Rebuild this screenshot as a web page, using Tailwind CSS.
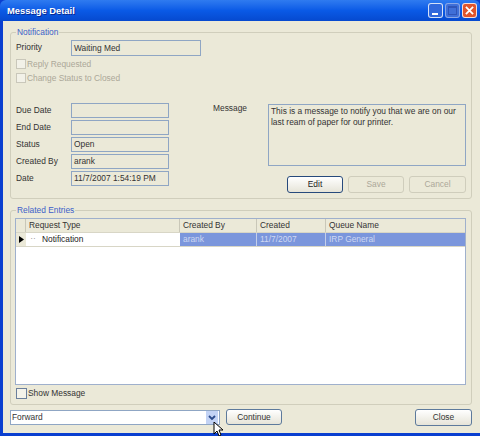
<!DOCTYPE html>
<html><head><meta charset="utf-8"><script src="https://cdn.jsdelivr.net/npm/@tailwindcss/browser@4"></script></head>
<body class="m-0 bg-[#0a3fd0]">
<div class="relative w-[480px] h-[436px] overflow-hidden font-['Liberation_Sans',Arial,sans-serif] text-[8.4px] leading-[13px] text-[#333]">
  <div class="w-[480px] h-[436px] flex flex-col bg-[#0a3fd0] rounded-t-[6px] overflow-hidden">
    <div class="h-[21px] shrink-0 flex items-center justify-between pl-[7px] pr-[3px] bg-gradient-to-b from-[#2f7bf0] via-[#0a5ae6] to-[#0649cf]">
      <span class="text-white font-bold text-[9.4px] [text-shadow:1px_1px_0_#0a2a90]">Message Detail</span>
      <div class="flex gap-[2px]">
        <div class="w-[15px] h-[15px] rounded-[3px] border border-white/80 bg-[#3168dc] flex items-end pl-[3px] pb-[2px]"><div class="w-[6px] h-[2px] bg-white"></div></div>
        <div class="w-[15px] h-[15px] rounded-[3px] border border-white/40 bg-[#3f6fd8] flex items-center justify-center"><div class="w-[9px] h-[9px] border border-[#2f55b8] border-t-2"></div></div>
        <div class="w-[15px] h-[15px] rounded-[3px] border border-white/80 bg-[#e0552c] flex items-center justify-center"><svg width="9" height="9" viewBox="0 0 10 10"><path d="M1 1L9 9M9 1L1 9" stroke="#fff" stroke-width="2"/></svg></div>
      </div>
    </div>
    <div class="flex-1 ml-[3px] mb-[3px] bg-[#ebe9d8] pt-[11px] pl-[7px]">
      <fieldset class="relative h-[167px] w-[462px] border border-[#d0cebc] rounded-[3px] pl-[5px]">
        <span class="absolute left-[5px] -top-[7px] bg-[#ebe9d8] px-[1px] text-[#3d5fc8]">Notification</span>
        <div class="pt-[6px] flex items-center h-[23px]"><span class="w-[55px]">Priority</span><div class="w-[130px] h-[16px] border border-[#8fa6c4] px-[2px] leading-[15px]">Waiting Med</div></div>
        <div class="flex items-center h-[14px] mt-[1px] text-[#aca899]"><div class="w-[10px] h-[10px] border border-[#c9c7ba] bg-[#f2f1e8] mr-[1px]"></div><span>Reply Requested</span></div>
        <div class="flex items-center h-[14px] text-[#aca899]"><div class="w-[10px] h-[10px] border border-[#c9c7ba] bg-[#f2f1e8] mr-[1px]"></div><span>Change Status to Closed</span></div>
        <div class="flex mt-[18px]">
          <div class="flex flex-col gap-[2px] w-[197px] shrink-0">
            <div class="flex items-center h-[15px]"><span class="w-[55px]">Due Date</span><div class="w-[98px] h-[15px] border border-[#8fa6c4]"></div></div>
            <div class="flex items-center h-[15px]"><span class="w-[55px]">End Date</span><div class="w-[98px] h-[15px] border border-[#8fa6c4]"></div></div>
            <div class="flex items-center h-[15px]"><span class="w-[55px]">Status</span><div class="w-[98px] h-[15px] border border-[#8fa6c4] px-[2px]">Open</div></div>
            <div class="flex items-center h-[15px]"><span class="w-[55px]">Created By</span><div class="w-[98px] h-[15px] border border-[#8fa6c4] px-[2px]">arank</div></div>
            <div class="flex items-center h-[15px]"><span class="w-[55px]">Date</span><div class="w-[98px] h-[15px] border border-[#8fa6c4] px-[2px]">11/7/2007 1:54:19 PM</div></div>
          </div>
          <div class="flex flex-1 pr-[5px]">
            <span class="w-[55px] mt-[-1px] shrink-0">Message</span>
            <div class="flex-1">
              <div class="h-[62px] mt-[1px] border border-[#8fa6c4] px-[2px] py-[1px] leading-[11px]">This is a message to notify you that we are on our last ream of paper for our printer.</div>
              <div class="flex justify-end gap-[5px] mt-[10px]">
                <button class="w-[56px] h-[17px] rounded-[3px] border border-[#274a7c] bg-gradient-to-b from-white to-[#e6e4d8] text-[#222]">Edit</button>
                <button class="w-[56px] h-[17px] rounded-[3px] border border-[#cfcdbc] text-[#aca899]">Save</button>
                <button class="w-[57px] h-[17px] rounded-[3px] border border-[#cfcdbc] text-[#aca899]">Cancel</button>
              </div>
            </div>
          </div>
        </div>
      </fieldset>
      <fieldset class="relative h-[195px] w-[462px] mt-[11px] border border-[#d0cebc] rounded-[3px] px-[4px] pt-[7px]">
        <span class="absolute left-[5px] -top-[7px] bg-[#ebe9d8] px-[1px] text-[#3d5fc8]">Related Entries</span>
        <div class="h-[167px] w-[451px] border border-[#9fb0cc] bg-white">
          <div class="flex h-[14px] bg-[#ebe9d8] border-b border-[#d8d6c6]">
            <div class="w-[10px] border-r border-[#c9c7b8]"></div>
            <div class="w-[154px] pl-[3px] border-r border-[#c9c7b8]">Request Type</div>
            <div class="w-[77px] pl-[3px] border-r border-[#c9c7b8]">Created By</div>
            <div class="w-[69px] pl-[3px] border-r border-[#c9c7b8]">Created</div>
            <div class="flex-1 pl-[3px]">Queue Name</div>
          </div>
          <div class="flex h-[14px] border-b border-[#d8d6c6]">
            <div class="w-[10px] bg-[#ebe9d8] flex items-center justify-center"><svg width="5" height="7" viewBox="0 0 5 7"><path d="M0 0L5 3.5L0 7Z" fill="#000"/></svg></div>
            <div class="w-[14px] text-[#999] text-center leading-[11px]">··</div>
            <div class="w-[140px] pl-[2px] text-[#222]">Notification</div>
            <div class="flex-1 flex bg-[#7b96dc] text-[#cfd8f2]">
              <div class="w-[77px] pl-[3px] border-r border-[#c4cfea]">arank</div>
              <div class="w-[69px] pl-[3px] border-r border-[#c4cfea]">11/7/2007</div>
              <div class="flex-1 pl-[3px]">IRP General</div>
            </div>
          </div>
        </div>
        <div class="flex items-center h-[14px] mt-[1px]"><div class="w-[11px] h-[11px] border border-[#6b7f9c] bg-[#f4f3ea] mr-[1px] ml-[1px]"></div><span>Show Message</span></div>
      </fieldset>
      <div class="flex items-start mt-[4px] h-[17px] w-[462px]">
        <div class="w-[210px] h-[15px] mt-[1px] border border-[#8fa6c4] bg-white flex justify-between items-center pl-[1px]">
          <span>Forward</span>
          <div class="w-[12px] h-[13px] bg-[#c3d3f5] mr-[1px] flex items-center justify-center"><svg width="8" height="6" viewBox="0 0 8 6"><path d="M1 1L4 4L7 1" fill="none" stroke="#2a4a8a" stroke-width="1.8"/></svg></div>
        </div>
        <button class="ml-[6px] w-[56px] h-[16px] rounded-[3px] border border-[#5d7a9c] bg-gradient-to-b from-white to-[#e6e4d8]">Continue</button>
        <button class="ml-auto w-[57px] h-[17px] rounded-[3px] border border-[#5d7a9c] bg-gradient-to-b from-white to-[#e6e4d8]">Close</button>
      </div>
    </div>
  </div>
  <svg class="absolute left-[213px] top-[422px]" width="11" height="15" viewBox="0 0 11 15"><path d="M1 0V12L4 9L6 14L8 13L6 8L10 8Z" fill="#fff" stroke="#000" stroke-width="1"/></svg>
</div>
</body></html>
